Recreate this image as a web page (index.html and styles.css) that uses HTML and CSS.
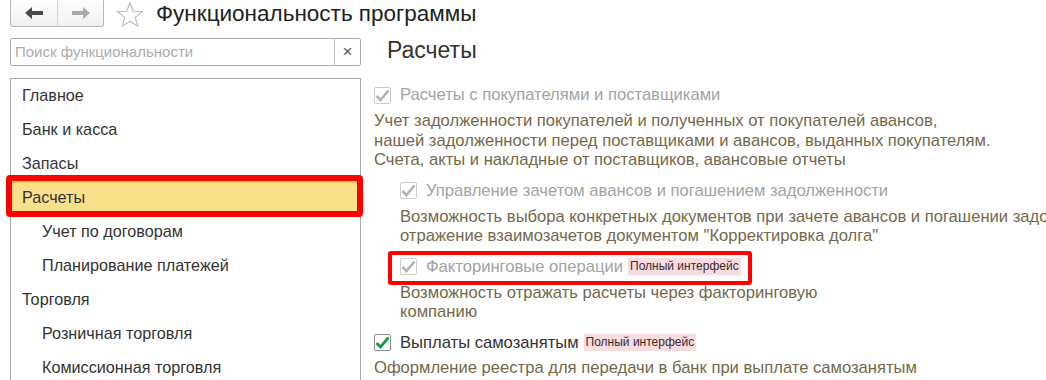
FILE: index.html
```html
<!DOCTYPE html>
<html lang="ru">
<head>
  <meta charset="UTF-8">
  <title>Функциональность программы</title>
  <link rel="stylesheet" href="styles.css">
</head>
<body>
  <div class="topbar">
    <div class="nav">
      <button class="nav-btn">
        <svg width="18" height="12" viewBox="0 0 18 12"><path d="M0 6 L7 0 L7 4 L18 4 L18 8 L7 8 L7 12 Z" fill="#4a4a4a"/></svg>
      </button>
      <button class="nav-btn">
        <svg width="18" height="12" viewBox="0 0 18 12"><path d="M18 6 L11 0 L11 4 L0 4 L0 8 L11 8 L11 12 Z" fill="#a9a9a9"/></svg>
      </button>
    </div>
    <svg class="star" width="28" height="27" viewBox="0 0 28 27">
      <path d="M14 1.5 L17.3 10.2 L26.6 10.6 L19.3 16.4 L21.8 25.4 L14 20.2 L6.2 25.4 L8.7 16.4 L1.4 10.6 L10.7 10.2 Z" fill="none" stroke="#b9b9b9" stroke-width="1.1" stroke-linejoin="round"/>
    </svg>
    <h1>Функциональность программы</h1>
  </div>

  <div class="main">
    <aside class="side">
      <div class="search">
        <span class="placeholder">Поиск функциональности</span>
        <span class="clear">×</span>
      </div>
      <ul class="sections">
        <li>Главное</li>
        <li>Банк и касса</li>
        <li>Запасы</li>
        <li class="selected">Расчеты</li>
        <li class="sub">Учет по договорам</li>
        <li class="sub">Планирование платежей</li>
        <li>Торговля</li>
        <li class="sub">Розничная торговля</li>
        <li class="sub">Комиссионная торговля</li>
      </ul>
    </aside>

    <section class="content">
      <h2>Расчеты</h2>

      <div class="option disabled">
        <span class="check"><svg width="15" height="13" viewBox="0 0 15 13"><path d="M1.5 7 L5.5 11 L13.5 1.5" fill="none" stroke="#b3b3b3" stroke-width="2.6"/></svg></span>
        <span class="label">Расчеты с покупателями и поставщиками</span>
      </div>
      <p class="desc">Учет задолженности покупателей и полученных от покупателей авансов,<br>нашей задолженности перед поставщиками и авансов, выданных покупателям.<br>Счета, акты и накладные от поставщиков, авансовые отчеты</p>

      <div class="nested">
        <div class="option disabled">
          <span class="check"><svg width="15" height="13" viewBox="0 0 15 13"><path d="M1.5 7 L5.5 11 L13.5 1.5" fill="none" stroke="#b3b3b3" stroke-width="2.6"/></svg></span>
          <span class="label">Управление зачетом авансов и погашением задолженности</span>
        </div>
        <p class="desc">Возможность выбора конкретных документов при зачете авансов и погашении задолженности,<br>отражение взаимозачетов документом "Корректировка долга"</p>

        <div class="option disabled marked">
          <span class="check"><svg width="15" height="13" viewBox="0 0 15 13"><path d="M1.5 7 L5.5 11 L13.5 1.5" fill="none" stroke="#b3b3b3" stroke-width="2.6"/></svg></span>
          <span class="label">Факторинговые операции</span>
          <span class="badge">Полный интерфейс</span>
        </div>
        <p class="desc">Возможность отражать расчеты через факторинговую<br>компанию</p>
      </div>

      <div class="option">
        <span class="check"><svg width="15" height="13" viewBox="0 0 15 13"><path d="M1.5 7 L5.5 11 L13.5 1.5" fill="none" stroke="#1a9a4c" stroke-width="2.8"/></svg></span>
        <span class="label">Выплаты самозанятым</span>
        <span class="badge">Полный интерфейс</span>
      </div>
      <p class="desc">Оформление реестра для передачи в банк при выплате самозанятым</p>
    </section>
  </div>
</body>
</html>
```

FILE: styles.css
```css
body {
  margin: 0;
  height: 380px;
  overflow: hidden;
  background: #fff;
  font-family: 'Liberation Sans', Arial, sans-serif;
  color: #333;
}
.topbar {
  display: flex;
  align-items: center;
  height: 27px;
  padding-left: 10px;
}
.nav {
  display: flex;
  align-self: flex-start;
  height: 31px;
  margin-top: -4px;
  padding-top: 4px;
  border: 1px solid #b8b8b8;
  border-top: none;
  border-radius: 0 0 3px 3px;
  background: linear-gradient(#fff, #f1f1f1);
  box-sizing: border-box;
}
.nav-btn {
  width: 46px;
  height: 26px;
  padding: 0;
  border: none;
  background: transparent;
  display: flex;
  align-items: center;
  justify-content: center;
}
.nav-btn + .nav-btn {
  border-left: 1px solid #d4d4d4;
}
.star {
  margin-left: 12px;
  margin-top: 1px;
}
h1 {
  margin: 0 0 0 12px;
  font-size: 22.5px;
  line-height: 26px;
  font-weight: normal;
  color: #222;
}
.main {
  display: flex;
  margin-top: 11px;
}
.side {
  width: 351px;
  margin-left: 10px;
  flex-shrink: 0;
}
.search {
  display: flex;
  height: 28px;
  border: 1px solid #a9a9a9;
  border-radius: 2px;
  box-sizing: border-box;
}
.placeholder {
  flex: 1;
  padding-left: 4px;
  line-height: 26px;
  font-size: 15px;
  color: #acacac;
}
.clear {
  width: 25px;
  border-left: 1px solid #c4c4c4;
  text-align: center;
  line-height: 25px;
  font-size: 17px;
  color: #555;
}
.sections {
  list-style: none;
  margin: 12px 0 0;
  padding: 0;
  height: 400px;
  border: 1px solid #a9a9a9;
}
.sections li {
  position: relative;
  height: 34px;
  line-height: 33px;
  padding-left: 11px;
  font-size: 16.2px;
  color: #333;
}
.sections li.sub {
  padding-left: 31px;
}
.sections li.selected {
  background: #fbe08c;
  box-shadow: inset 0 2px 0 #f6c94c;
}
.sections li.selected::after {
  content: "";
  position: absolute;
  top: -6px;
  left: -5px;
  right: -3px;
  bottom: -2px;
  border: 6px solid #f00;
  border-radius: 4px;
}
.content {
  margin-left: 13px;
  flex: 1;
  white-space: nowrap;
}
h2 {
  margin: 0 0 23px 13px;
  font-size: 23px;
  line-height: 24px;
  font-weight: normal;
  color: #333;
}
.option {
  position: relative;
  display: flex;
  align-items: center;
  height: 20px;
  font-size: 16.6px;
}
.check {
  width: 15px;
  height: 15px;
  margin-right: 9px;
  border: 1px solid #8e8e8e;
  border-radius: 2px;
  display: flex;
  align-items: center;
  justify-content: center;
  background: #fff;
}
.disabled .check {
  border-color: #cdcdcd;
}
.disabled .label {
  color: #a3a3a3;
}
.badge {
  margin-left: 5px;
  padding: 0 2px;
  height: 17px;
  line-height: 17px;
  font-size: 12px;
  background: #f9dcdf;
  color: #3a2a2a;
}
.marked {
  align-self: flex-start;
  display: inline-flex;
}
.marked::after {
  content: "";
  position: absolute;
  top: -6px;
  left: -12px;
  right: -11px;
  bottom: -8px;
  border: 4px solid #f00;
  border-radius: 3px;
}
.nested {
  margin-left: 26px;
  display: flex;
  flex-direction: column;
}
.desc {
  margin: 6px 0 11px;
  font-size: 16.6px;
  line-height: 19.5px;
  color: #75684a;
}
.content > .desc:last-child {
  margin-top: 5px;
}
```
